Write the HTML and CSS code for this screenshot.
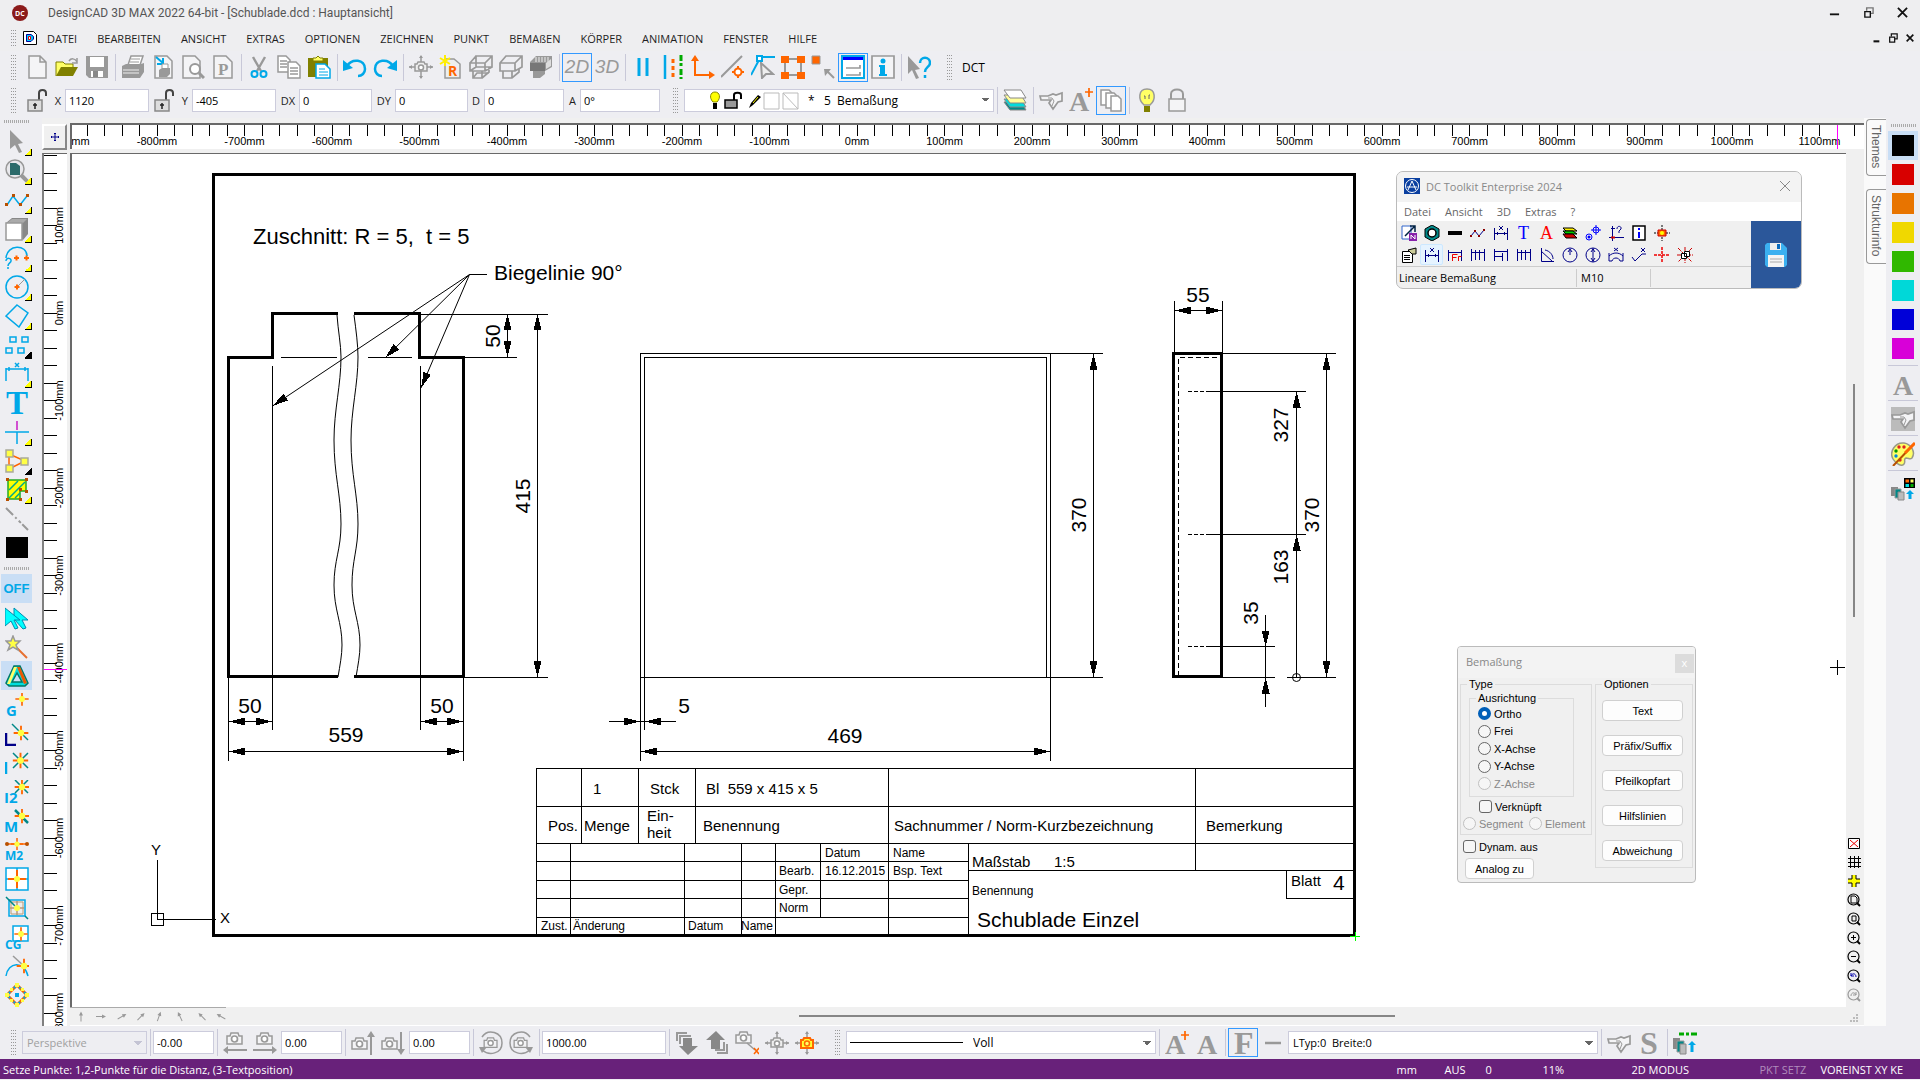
FILE: index.html
```html
<!DOCTYPE html>
<html lang="de">
<head>
    <meta charset="UTF-8">
    <meta name="viewport" content="width=device-width, initial-scale=1.0">
    <title>DesignCAD 3D MAX 2022 64-bit - [Schublade.dcd : Hauptansicht]</title>
    <link rel="stylesheet" href="styles.css">
</head>
<body>
    <!-- Icon sprite -->
    <svg class="sprite" aria-hidden="true">
        <!-- standard toolbar -->
        <symbol id="i-new" viewBox="0 0 24 24"><path d="M4 1h11l6 6v16H4zM15 1v6h6" fill="#f4f4f6" stroke="#999" stroke-width="1.5"/></symbol>
        <symbol id="i-open" viewBox="0 0 24 24"><path d="M1 21V7h7l2 2h8v3" fill="#ff6" stroke="#808000"/><path d="M1 21l5-9h17l-5 9z" fill="#808000"/><path d="M14 6c2-3 6-3 8 1m0-4v5h-5" fill="none" stroke="#999" stroke-width="1.5"/></symbol>
        <symbol id="i-save" viewBox="0 0 24 24"><path d="M1 1h22v22H4l-3-3z" fill="#999"/><path d="M5 2h14v10H5z" fill="#fff"/><path d="M6 16h12v6H6z" fill="#fff"/><path d="M8 16h5v6H8z" fill="#888"/></symbol>
        <symbol id="i-print" viewBox="0 0 24 24"><path d="M7 10l3-9h12l-3 9" fill="#fff" stroke="#999" stroke-width="1.5"/><path d="M10 4h9M9 7h9" stroke="#999"/><path d="M1 11l4-2h15l3-1v9l-4 6H1z" fill="#999"/><path d="M2 15h16M2 18h16" stroke="#eee"/></symbol>
        <symbol id="i-import" viewBox="0 0 24 24"><path d="M4 1h12l5 5v17H4z" fill="#f4f4f6" stroke="#999" stroke-width="1.5"/><path d="M5 2l7 6m0-5v6H6" fill="none" stroke="#00a8e8" stroke-width="2"/><path d="M8 15l3-2h8v6l-3 3H8z" fill="#999"/><path d="M11 13V9h6v4" fill="#fff" stroke="#999"/></symbol>
        <symbol id="i-preview" viewBox="0 0 24 24"><path d="M2 1h12l5 5v17H2z" fill="#f4f4f6" stroke="#999" stroke-width="1.5"/><circle cx="14" cy="14" r="5" fill="#fff" stroke="#999" stroke-width="2"/><path d="M18 18l5 5" stroke="#999" stroke-width="3"/></symbol>
        <symbol id="i-pdoc" viewBox="0 0 24 24"><path d="M3 1h12l6 6v16H3z" fill="#f4f4f6" stroke="#999" stroke-width="1.5"/><text x="7" y="20" class="serif-b" font-size="17" fill="#999">P</text></symbol>
        <symbol id="i-cut" viewBox="0 0 24 24"><path d="M6 2l8 14M18 2l-8 14" stroke="#999" stroke-width="2.4"/><g fill="none" stroke="#00a8e8" stroke-width="2"><circle cx="7.5" cy="19" r="3"/><circle cx="16.5" cy="19" r="3"/></g></symbol>
        <symbol id="i-copy" viewBox="0 0 24 24"><g fill="#fff" stroke="#999" stroke-width="1.5"><path d="M1 1h8l4 4v12H1z"/><path d="M11 7h8l4 4v12H11z"/></g><path d="M3 6h7M3 9h7M3 12h7M13 13h8M13 16h8M13 19h8" stroke="#999" stroke-width="1.5"/></symbol>
        <symbol id="i-paste" viewBox="0 0 24 24"><path d="M1 3h20v19H1z" fill="#808000"/><path d="M6 6V3h3l2-2 2 2h3v3z" fill="#ff6" stroke="#808000"/><path d="M9 9h9l5 5v9H9z" fill="#fff" stroke="#00a8e8" stroke-width="1.5"/><path d="M12 14h6M12 17h9M12 20h9" stroke="#00a8e8"/></symbol>
        <symbol id="i-undo" viewBox="0 0 24 24"><path d="M4 11c5-8 18-7 18 3 0 4-3 7-7 7" fill="none" stroke="#00a8e8" stroke-width="2.5"/><path d="M0 5v11l10-3z" fill="#00a8e8"/></symbol>
        <symbol id="i-redo" viewBox="0 0 24 24"><path d="M20 11C15 3 2 4 2 14c0 4 3 7 7 7" fill="none" stroke="#00a8e8" stroke-width="2.5"/><path d="M24 5v11l-10-3z" fill="#00a8e8"/></symbol>
        <symbol id="i-cam-cross" viewBox="0 0 24 24"><path d="M12 1v22M0 12h24" stroke="#999" stroke-width="1.5"/><path d="M12 0l2 3h-4zM12 24l2-3h-4zM0 12l3-2v4zM24 12l-3-2v4z" fill="#999"/><path d="M6 9h2l1-2h6l1 2h2v7H6z" fill="#eee" stroke="#999" stroke-width="1.5"/><circle cx="12" cy="12.5" r="2.5" fill="#fff" stroke="#999" stroke-width="1.5"/></symbol>
        <symbol id="i-cam-on" viewBox="0 0 24 24"><path d="M12 1v22M0 12h24" stroke="#999" stroke-width="1.5"/><path d="M12 0l2 3h-4zM12 24l2-3h-4zM0 12l3-2v4zM24 12l-3-2v4z" fill="#999"/><path d="M6 9h2l1-2h6l1 2h2v8H6z" fill="#ff3" stroke="#f60" stroke-width="2"/><circle cx="12" cy="12.5" r="2.5" fill="#ff6" stroke="#f60" stroke-width="1.5"/></symbol>
        <symbol id="i-render" viewBox="0 0 24 24"><path d="M6 4h9l6 5v14H6z" fill="#eee" stroke="#999" stroke-width="1.5"/><path d="M6 0v11M1 3l10 6M11 3L1 9" stroke="#fe0" stroke-width="2"/><text x="9" y="21" class="ui-b" font-size="14" fill="#f60">R</text></symbol>
        <symbol id="i-wire" viewBox="0 0 24 24"><path d="M7 1h16v11H7zM1 8h15v8H1zM1 8l6-7M16 8l7-7M16 16l7-4M1 16l6-4M4 16v7h9v-7M13 23l7-6v-5M4 23l4-5h12" fill="none" stroke="#999" stroke-width="1.7"/></symbol>
        <symbol id="i-hidden" viewBox="0 0 24 24"><path d="M1 8l6-7h16v11l-7 4H1zM1 8h15v8M16 8l7-7M4 16v7h9l7-6v-3M13 23v-7" fill="none" stroke="#999" stroke-width="1.7"/></symbol>
        <symbol id="i-shade" viewBox="0 0 24 24"><path d="M1 7l6-6h16v11l-7 4v3l-5 4H4v-7H1z" fill="#999"/><path d="M7 2v5M10 2v5M13 2v5M16 2v5M19 2v5" stroke="#eee"/><path d="M17 8l5-4v7l-5 3z" fill="#ddd"/><path d="M1 8h15v8H1z" fill="#777"/></symbol>
        <symbol id="i-parallel" viewBox="0 0 24 24"><path d="M8 3v18M16 3v18" stroke="#00a8e8" stroke-width="3"/></symbol>
        <symbol id="i-lines" viewBox="0 0 24 24"><path d="M4 0v24" stroke="#00a8e8" stroke-width="2.5"/><path d="M12 4v18" stroke="#f60" stroke-width="3" stroke-dasharray="4 3"/><path d="M20 0v24" stroke="#0a0" stroke-width="3" stroke-dasharray="6 2 3 3"/></symbol>
        <symbol id="i-axes" viewBox="0 0 24 24"><path d="M4 3v17h17" fill="none" stroke="#f60" stroke-width="2"/><path d="M4 0l4 6H0zM24 20l-6 4v-8z" fill="#f60"/></symbol>
        <symbol id="i-snapline" viewBox="0 0 24 24"><path d="M0 22L21 1" stroke="#999" stroke-width="2"/><path d="M17 11v12M11 17h12" stroke="#f60" stroke-width="2"/><circle cx="17" cy="17" r="3.5" fill="#fff" stroke="#f60" stroke-width="2"/></symbol>
        <symbol id="i-vertex" viewBox="0 0 24 24"><path d="M0 20L8 5M11 2h13" stroke="#00a8e8" stroke-width="2"/><path d="M10 8l12 11h-7l-4 4z" fill="#eee" stroke="#999" stroke-width="2"/><path d="M6 1h5v5H6z" fill="#fff" stroke="#00a8e8" stroke-width="2"/></symbol>
        <symbol id="i-nodes4" viewBox="0 0 24 24"><path d="M4 4h16v16H4z" fill="none" stroke="#999" stroke-width="2"/><path d="M0 1h8v7H0zM16 1h8v7h-8zM0 17h8v7H0zM16 17h8v7h-8z" fill="#f60"/></symbol>
        <symbol id="i-node1" viewBox="0 0 24 24"><path d="M1 1h8v8H1z" fill="#f60" stroke="#999"/><path d="M23 23l-8-8" stroke="#999" stroke-width="2"/><path d="M13 14h7l-6 7z" fill="#999"/></symbol>
        <symbol id="i-panel" viewBox="0 0 24 24"><path d="M1 1h22v22H1z" fill="#fff" stroke="#00a8e8" stroke-width="2"/><path d="M2 2h20v3H2z" fill="#00f"/><path d="M5 13h14v-3M5 20h14v-3" fill="none" stroke="#999" stroke-width="1.7"/></symbol>
        <symbol id="i-info" viewBox="0 0 24 24"><path d="M1 1h22v22H1z" fill="#f4f4f6" stroke="#999" stroke-width="1.7"/><circle cx="12" cy="6" r="2.5" fill="#00a8e8"/><path d="M8 10h6v9h2v2H8v-2h1v-7H8z" fill="#00a8e8"/></symbol>
        <symbol id="i-help" viewBox="0 0 24 24"><path d="M1 1l12 13-5 1 4 8-3 1-4-9-4 4z" fill="#999"/><path d="M13 8c0-7 10-7 10 0 0 4-5 4-5 9M18 20v3" fill="none" stroke="#00a8e8" stroke-width="2.5"/></symbol>
        <!-- coordinate and layer bar -->
        <symbol id="i-unlock" viewBox="0 0 24 24"><path d="M14 12V5c0-4 7-4 7 0v3" fill="none" stroke="#444" stroke-width="2"/><path d="M3 12h14v11H3z" fill="#ddd" stroke="#888" stroke-width="1.5"/><path d="M10 15v6M8 17h4" stroke="#222" stroke-width="1.5" fill="none"/></symbol>
        <symbol id="i-layers" viewBox="0 0 24 24"><g stroke="#888"><path d="M1 14h17l5 8H7z" fill="#088"/><path d="M1 11h17l5 8H7z" fill="#0dd"/><path d="M1 7h17l5 8H7z" fill="#ff9"/><path d="M1 2h17l5 8H7z" fill="#fff"/></g></symbol>
        <symbol id="i-hand" viewBox="0 0 24 24"><path d="M1 8h8l5-2 3 1 6-2v8l-4 1-5 7-4-6 2-3H2z" fill="#f4f4f6" stroke="#999" stroke-width="1.7"/><path d="M9 10h4l2 3-2 5" fill="none" stroke="#999"/></symbol>
        <symbol id="i-aplus" viewBox="0 0 24 24"><text x="0" y="23" class="serif-b" font-size="28" fill="#999">A</text><path d="M20 0v9M16 4h8" stroke="#f60" stroke-width="1.7"/></symbol>
        <symbol id="i-a" viewBox="0 0 24 24"><text x="2" y="23" class="serif-b" font-size="28" fill="#999">A</text></symbol>
        <symbol id="i-f" viewBox="0 0 24 24"><text x="3" y="23" class="serif-b" font-size="32" fill="#999">F</text></symbol>
        <symbol id="i-s" viewBox="0 0 24 24"><text x="3" y="23" class="serif-b" font-size="32" fill="#999">S</text></symbol>
        <symbol id="i-pages" viewBox="0 0 24 24"><g fill="#fff" stroke="#999" stroke-width="1.5"><path d="M2 2h8l3 3v12H2z"/><path d="M7 5h8l3 3v12H7z"/><path d="M12 8h7l3 3v12H12z"/></g></symbol>
        <symbol id="i-bulb" viewBox="0 0 24 24"><path d="M9 17c-6-5-6-16 3-16s9 11 3 16z" fill="#ff6" stroke="#999" stroke-width="1.5"/><path d="M9 18h6v6H9z" fill="#808000"/><path d="M9 8h1v3M15 7h-1v4" stroke="#666" fill="none"/></symbol>
        <symbol id="i-lock" viewBox="0 0 24 24"><path d="M6 11V6c0-6 12-6 12 0v5" fill="none" stroke="#999" stroke-width="2"/><path d="M4 11h16v12H4z" fill="#f4f4f6" stroke="#999" stroke-width="1.5"/></symbol>
        <!-- drawing tools -->
        <symbol id="i-arrow" viewBox="0 0 24 24"><path d="M5 0l13 13-5 1 4 8-3 1-4-8-5 4z" fill="#999"/></symbol>
        <symbol id="i-zoom" viewBox="0 0 24 24"><path d="M16 16l7 7" stroke="#999" stroke-width="4"/><circle cx="10" cy="10" r="9" fill="#e8e8ec" stroke="#999" stroke-width="1.5"/><path d="M5 4h6l4 3v9H5z" fill="#2c6b6b"/></symbol>
        <symbol id="i-poly" viewBox="0 0 24 24"><path d="M2 17l6-9 7 9 7-9" fill="none" stroke="#00a8e8" stroke-width="1.5"/><path d="M0 15h3v3H0zM7 6h3v3H7zM14 15h3v3h-3zM21 6h3v3h-3z" fill="#b85000"/></symbol>
        <symbol id="i-box" viewBox="0 0 24 24"><path d="M1 6l6-5h16v16l-5 6z" fill="#888"/><path d="M2 6l5-4h15l-4 4z" fill="#aaa"/><path d="M1 6h16v17H1z" fill="#fff" stroke="#999" stroke-width="1.5"/></symbol>
        <symbol id="i-arc" viewBox="0 0 24 24"><path d="M1 12C2-2 22-2 22 10" fill="none" stroke="#00a8e8" stroke-width="1.5"/><path d="M1 15c0-4 6-3 5 0 0 2-3 2-3 5m0 1v2" fill="none" stroke="#00a8e8" stroke-width="1.5"/><path d="M9 12h5M11.5 9.5v5M19 12h5M21.5 9.5v5" stroke="#f60" stroke-width="2"/></symbol>
        <symbol id="i-circle" viewBox="0 0 24 24"><circle cx="12" cy="12" r="11" fill="none" stroke="#00a8e8" stroke-width="1.5"/><path d="M12 12l8-8" stroke="#999"/><path d="M9.5 12h5M12 9.5v5" stroke="#f60" stroke-width="2"/></symbol>
        <symbol id="i-pentagon" viewBox="0 0 24 24"><path d="M12 1l11 8-9 14L1 12z" fill="none" stroke="#00a8e8" stroke-width="1.5"/></symbol>
        <symbol id="i-array" viewBox="0 0 24 24"><path d="M5 4h6v5H5zM17 4h6v5h-6zM1 15h6v5H1zM13 15h6v5h-6z" fill="none" stroke="#00a8e8" stroke-width="1.5"/></symbol>
        <symbol id="i-dim" viewBox="0 0 24 24"><path d="M1 6v13M23 6v13M1 7h22M4 5v4M20 5v4M10 1l4 4M14 1l-4 4" stroke="#00a8e8" stroke-width="1.5" fill="none"/></symbol>
        <symbol id="i-text" viewBox="0 0 24 24"><text x="1" y="23" class="serif-b" font-size="33" fill="#00a8e8">T</text></symbol>
        <symbol id="i-cross" viewBox="0 0 24 24"><path d="M0 12h24M12 12v12" stroke="#00a8e8" stroke-width="1.5"/><path d="M12 1v9" stroke="#c3c" stroke-width="1.7"/></symbol>
        <symbol id="i-graph" viewBox="0 0 24 24"><path d="M4 5l16 7L4 20z" fill="none" stroke="#f60" stroke-width="1.5"/><path d="M1 1h7v7H1zM16 9h7v7h-7zM1 16h7v7H1z" fill="#ff4" stroke="#aa9" stroke-width="1.5"/></symbol>
        <symbol id="i-hatch" viewBox="0 0 24 24"><path d="M3 2h18v11h-6v8H3z" fill="#ff0" stroke="#2a2" stroke-width="1.5"/><path d="M4 12L13 3M4 20L20 4M10 20l5-5" stroke="#0a8" stroke-width="1.5"/><path d="M1 0h3v3H1zM20 0h3v3h-3zM20 12h3v3h-3zM14 10h3v3h-3zM1 20h3v3H1zM14 20h3v3h-3z" fill="#b85000"/></symbol>
        <symbol id="i-dash" viewBox="0 0 24 24"><path d="M1 1l22 22" stroke="#999" stroke-width="2" stroke-dasharray="10 3 2 3 3 2"/></symbol>
        <symbol id="i-black" viewBox="0 0 24 24"><path d="M1 1h22v21H1z"/></symbol>
        <!-- snap tools -->
        <symbol id="star" viewBox="0 0 24 24"><path d="M12 4v16M4 12h16" stroke="#f60" stroke-width="2"/><circle cx="12" cy="12" r="3.5" fill="#ff4"/></symbol>
        <symbol id="i-arrows" viewBox="0 0 24 24"><g fill="#0ff" stroke="#008bb0"><path d="M9 2l14 12h-6l4 8-3 1-9-10z"/><path d="M0 2l15 12H9l4 8-3 1-4-8-6 5z"/></g></symbol>
        <symbol id="i-wand" viewBox="0 0 24 24"><path d="M10 11l12 12" stroke="#e67030" stroke-width="2"/><path d="M8 1l2 5h5l-4 4 2 5-5-3-5 3 2-5-4-4h5z" fill="#ff4" stroke="#999" stroke-width="1.5"/></symbol>
        <symbol id="i-delta" viewBox="0 0 24 24"><path d="M9 2h6l8 17-3 3H4l-3-3zM12 9l-5 9h10z" fill="#0dd" stroke="#076" stroke-width="1.5" fill-rule="evenodd"/><path d="M9 3h3L5 20H2z" fill="#ff6"/><path d="M12 3h3l7 16-3 1z" fill="#e50"/></symbol>
        <symbol id="i-g" viewBox="0 0 24 24"><text x="1" y="23" class="ui-b" font-size="15" fill="#00a8e8">G</text><use href="#star" x="7" y="-4" width="20" height="20"/></symbol>
        <symbol id="i-l" viewBox="0 0 24 24"><path d="M7 2l16 16" stroke="#088" stroke-width="1.5"/><path d="M1 11v12h10" fill="none" stroke="#008" stroke-width="2.5"/><use href="#star" x="5" y="0" width="22" height="22"/></symbol>
        <symbol id="i-i" viewBox="0 0 24 24"><path d="M8 2l15 15M23 2L8 17" stroke="#088" stroke-width="1.5"/><path d="M1 11v12" stroke="#00a8e8" stroke-width="2.5"/><use href="#star" x="4" y="-2" width="23" height="23"/></symbol>
        <symbol id="i-i2" viewBox="0 0 24 24"><path d="M10 0l13 13M23 0L10 13" stroke="#088" stroke-width="1.5"/><text x="-1" y="23" class="ui-b" font-size="15" fill="#00a8e8">I2</text><use href="#star" x="6" y="-4" width="22" height="22"/></symbol>
        <symbol id="i-m" viewBox="0 0 24 24"><path d="M10 1l13 13" stroke="#088" stroke-width="2.5"/><text x="-1" y="23" class="ui-b" font-size="15" fill="#00a8e8">M</text><use href="#star" x="6" y="-4" width="22" height="22"/></symbol>
        <symbol id="i-m2" viewBox="0 0 24 24"><path d="M2 6h20" stroke="#f60" stroke-width="1.5"/><circle cx="2" cy="6" r="2" fill="#b85000"/><circle cx="22" cy="6" r="2" fill="#b85000"/><text x="0" y="22" class="ui-b" font-size="12" fill="#00a8e8">M2</text><use href="#star" x="3" y="-3" width="18" height="18"/></symbol>
        <symbol id="i-grid" viewBox="0 0 24 24"><path d="M1 1h22v22H1z" fill="#fff" stroke="#00a8e8" stroke-width="1.5"/><path d="M12 1v22M1 12h22" stroke="#00a8e8" stroke-width="1.5"/><path d="M12 3v18M3 12h18" stroke="#f60" stroke-width="2"/><circle cx="12" cy="12" r="3" fill="#ff4"/></symbol>
        <symbol id="i-grid2" viewBox="0 0 24 24"><path d="M4 4h16v16H4z" fill="#eee" stroke="#00a8e8" stroke-width="1.5"/><path d="M6 6h12v12H6z" fill="none" stroke="#b97"/><path d="M12 5v14M5 12h14" stroke="#b97" stroke-width="1.5"/><path d="M1 1l9 9M20 20l3 3" stroke="#088" stroke-width="1.5"/><circle cx="12" cy="12" r="3" fill="#ff4"/></symbol>
        <symbol id="i-cg" viewBox="0 0 24 24"><path d="M8 1h15v15H8z" fill="#fff" stroke="#00a8e8" stroke-width="1.5"/><text x="0" y="24" class="ui-b" font-size="12" fill="#00a8e8">CG</text><use href="#star" x="6" y="-1" width="20" height="20"/></symbol>
        <symbol id="i-tangent" viewBox="0 0 24 24"><path d="M1 22c2-14 18-16 22 0" fill="none" stroke="#00a8e8" stroke-width="1.5"/><path d="M8 2l12 11" stroke="#999" stroke-width="1.5"/><use href="#star" x="8" y="1" width="22" height="22"/></symbol>
        <symbol id="i-ring" viewBox="0 0 24 24"><path d="M12 2l10 10-10 10L2 12z" fill="none" stroke="#f60" stroke-width="3"/><path d="M12 2l10 10-10 10L2 12z" fill="none" stroke="#00a8e8" stroke-width="2" stroke-dasharray="2 5" stroke-dashoffset="-3"/><path d="M10 0h4v4h-4zM16 5h3v3h-3zM20 10h4v4h-4zM16 16h3v3h-3zM10 20h4v4h-4zM5 16h3v3H5zM0 10h4v4H0zM5 5h3v3H5z" fill="#ff4"/><path d="M10 10h4v4h-4z" fill="#00a8e8"/></symbol>
        <!-- view bar -->
        <symbol id="cam" viewBox="0 0 18 14"><path d="M1 4h3l1-3h7l1 3h3v8H1z" fill="#f4f4f6" stroke="#999" stroke-width="1.5"/><circle cx="8.5" cy="7" r="3" fill="#fff" stroke="#999" stroke-width="1.7"/></symbol>
        <symbol id="i-cam-l" viewBox="0 0 24 24"><use href="#cam" x="3" y="1" width="18" height="14"/><path d="M2 19h22" stroke="#999" stroke-width="2"/><path d="M0 19l5-4v8z" fill="#999"/></symbol>
        <symbol id="i-cam-r" viewBox="0 0 24 24"><use href="#cam" x="3" y="1" width="18" height="14"/><path d="M0 19h22" stroke="#999" stroke-width="2"/><path d="M24 19l-5-4v8z" fill="#999"/></symbol>
        <symbol id="i-cam-u" viewBox="0 0 24 24"><use href="#cam" x="0" y="6" width="18" height="14"/><path d="M20 3v21" stroke="#999" stroke-width="2"/><path d="M20 0l4 6h-8z" fill="#999"/></symbol>
        <symbol id="i-cam-d" viewBox="0 0 24 24"><use href="#cam" x="0" y="6" width="18" height="14"/><path d="M20 1v20" stroke="#999" stroke-width="2"/><path d="M20 24l4-6h-8z" fill="#999"/></symbol>
        <symbol id="i-cam-cw" viewBox="0 0 24 24"><use href="#cam" x="4" y="6" width="16" height="12"/><path d="M3 6c6-9 20-5 20 6s-13 13-20 7" fill="none" stroke="#999" stroke-width="1.5"/><path d="M0 16h8l-5 6z" fill="#999"/></symbol>
        <symbol id="i-cam-ccw" viewBox="0 0 24 24"><use href="#cam" x="4" y="6" width="16" height="12"/><path d="M21 6C15-3 1 1 1 12s13 13 20 7" fill="none" stroke="#999" stroke-width="1.5"/><path d="M24 16h-8l5 6z" fill="#999"/></symbol>
        <symbol id="i-down" viewBox="0 0 24 24"><path d="M2 10V2h10M5 13V5h11" fill="none" stroke="#999" stroke-width="2"/><path d="M8 7h9v8h6L13 24 4 15h4z" fill="#888"/></symbol>
        <symbol id="i-up" viewBox="0 0 24 24"><path d="M22 13v9H12M19 11v8h-9" fill="none" stroke="#999" stroke-width="2"/><path d="M6 18h9V9h5L11 0 1 9h5z" fill="#888"/></symbol>
        <symbol id="i-cam-x" viewBox="0 0 24 24"><use href="#cam" x="0" y="0" width="18" height="14"/><path d="M12 12l8 7" stroke="#999" stroke-width="1.5"/><path d="M19 17l5 6M24 17l-5 6" stroke="#f60" stroke-width="1.5"/></symbol>
        <symbol id="i-minus" viewBox="0 0 24 24"><path d="M4 12h16" stroke="#999" stroke-width="2.5"/></symbol>
        <symbol id="i-stack" viewBox="0 0 24 24"><path d="M6 3h5M13 3h3M18 3h6" stroke="#0a0" stroke-width="3"/><path d="M0 7h7v11H0z" fill="#888"/><path d="M4 10h7v11H4z" fill="#088" stroke="#999"/><path d="M7 13h6v10H7z" fill="#bbb" stroke="#888"/><path d="M19 10l4 4h-2.5v7h-3v-7H15z" fill="#00a8e8"/></symbol>
        <symbol id="i-palette" viewBox="0 0 24 24"><path d="M13 1C4 0-2 10 2 17c3 5 9 8 11 5 2-2-1-5 2-6 3 0 4 2 6 0C25 10 20 2 13 1z" fill="#ff6" stroke="#998" stroke-width="1.5"/><g fill="#d22"><circle cx="8" cy="5" r="1.7"/><circle cx="13" cy="5" r="1.7"/><circle cx="5" cy="9" r="1.7" fill="#090"/><circle cx="5" cy="14" r="1.7" fill="#08d"/><circle cx="9" cy="18" r="1.7"/></g><path d="M2 24L23 2" stroke="#b85000" stroke-width="2"/><path d="M14 11L24 1" stroke="#f60" stroke-width="3"/></symbol>
        <symbol id="i-colstack" viewBox="0 0 24 24"><path d="M13 1h11v10H13z"/><path d="M14.5 2.5H18v3h-3.5z" fill="#f60"/><path d="M19.5 2.5h3v3h-3z" fill="#ff6"/><path d="M14.5 7H18v3h-3.5z" fill="#0dd"/><path d="M19.5 7h3v3h-3z" fill="#0a0"/><path d="M0 10h7v9H0z" fill="#888"/><path d="M4 12h6v9H4z" fill="#088" stroke="#999"/><path d="M7 15h6v8H7z" fill="#bbb" stroke="#888"/><path d="M19 13l4 4h-2.5v5h-3v-5H15z" fill="#00a8e8"/></symbol>
        <!-- mini view icons -->
        <symbol id="m-mag" viewBox="0 0 14 14"><circle cx="6.5" cy="6.5" r="5.5" fill="none" stroke="currentColor" stroke-width="1.2"/><path d="M10 10l3 3" stroke="currentColor" stroke-width="2"/></symbol>
        <!-- toolkit icons -->
        <symbol id="k-dim" viewBox="0 0 16 16"><path d="M1.5 3v12M14.5 3v12M1 8.5h14M4.5 7v3M11.5 7v3M6 1l4 4M10 1L6 5" stroke="currentColor" fill="none"/></symbol>
        <symbol id="k-comb" viewBox="0 0 16 16"><path d="M1.5 2v12M14.5 2v12M5.5 3v10M9.5 3v10M1 5.5h14" stroke="#008" fill="none"/></symbol>
    </svg>

    <header class="titlebar">
        <svg class="app-logo" viewBox="0 0 16 16"><circle cx="8" cy="8" r="8" fill="#8b1a1a"/><text x="3" y="11" class="ui-b" font-size="7" fill="#fff">DC</text></svg>
        <h1>DesignCAD 3D MAX 2022 64-bit - [Schublade.dcd : Hauptansicht]</h1>
        <div class="win-buttons">
            <button aria-label="Minimieren"><svg viewBox="0 0 12 12"><path d="M1 8h10" stroke="#111" stroke-width="2"/></svg></button>
            <button aria-label="Wiederherstellen"><svg viewBox="0 0 12 12"><path d="M4 4V1h7v6H8" fill="none" stroke="#777" stroke-width="1.5"/><path d="M2 5h6v6H2z" fill="none" stroke="#111" stroke-width="1.5"/></svg></button>
            <button aria-label="Schließen"><svg viewBox="0 0 12 12"><path d="M1 1l10 10M11 1L1 11" stroke="#111" stroke-width="2"/></svg></button>
        </div>
    </header>

    <nav class="menubar">
        <span class="grip"></span>
        <svg class="doc-logo" viewBox="0 0 16 16"><path d="M1.5 1.5h10l3 3v10h-13z" fill="#fff" stroke="#000"/><path d="M4.5 4.5H9l2.5 2V9l-2.500 2.500h-4.500z" fill="#0cf" stroke="#009"/><path d="M6.5 6.5h2v3h-2z" fill="#fff" stroke="#e00"/></svg>
        <a href="#">DATEI</a>
        <a href="#">BEARBEITEN</a>
        <a href="#">ANSICHT</a>
        <a href="#">EXTRAS</a>
        <a href="#">OPTIONEN</a>
        <a href="#">ZEICHNEN</a>
        <a href="#">PUNKT</a>
        <a href="#">BEMAßEN</a>
        <a href="#">KÖRPER</a>
        <a href="#">ANIMATION</a>
        <a href="#">FENSTER</a>
        <a href="#">HILFE</a>
        <div class="win-buttons small">
            <button aria-label="Fenster minimieren"><svg viewBox="0 0 12 12"><path d="M3 10h7" stroke="#111" stroke-width="2.5"/></svg></button>
            <button aria-label="Fenster wiederherstellen"><svg viewBox="0 0 12 12"><path d="M4 4V1h7v6H8M2 5h6v6H2z" fill="none" stroke="#111" stroke-width="1.5"/></svg></button>
            <button aria-label="Fenster schließen"><svg viewBox="0 0 12 12"><path d="M2 2l8 8M10 2l-8 8" stroke="#111" stroke-width="2"/></svg></button>
        </div>
    </nav>

    <div class="toolbar standard">
        <span class="grip"></span>
        <button aria-label="Neu"><svg><use href="#i-new"/></svg></button>
        <button aria-label="Öffnen"><svg><use href="#i-open"/></svg></button>
        <button aria-label="Speichern"><svg><use href="#i-save"/></svg></button>
        <span class="sep"></span>
        <button aria-label="Drucken"><svg><use href="#i-print"/></svg></button>
        <button aria-label="Schnelldruck"><svg><use href="#i-import"/></svg></button>
        <button aria-label="Seitenansicht"><svg><use href="#i-preview"/></svg></button>
        <button aria-label="Parameter"><svg><use href="#i-pdoc"/></svg></button>
        <span class="sep"></span>
        <button aria-label="Ausschneiden"><svg><use href="#i-cut"/></svg></button>
        <button aria-label="Kopieren"><svg><use href="#i-copy"/></svg></button>
        <button aria-label="Einfügen"><svg><use href="#i-paste"/></svg></button>
        <span class="sep"></span>
        <button aria-label="Rückgängig"><svg><use href="#i-undo"/></svg></button>
        <button aria-label="Wiederholen"><svg><use href="#i-redo"/></svg></button>
        <span class="sep"></span>
        <button aria-label="Kamera"><svg><use href="#i-cam-cross"/></svg></button>
        <button aria-label="Rendern"><svg><use href="#i-render"/></svg></button>
        <button aria-label="Drahtmodell"><svg><use href="#i-wire"/></svg></button>
        <button aria-label="Verdeckte Linien"><svg><use href="#i-hidden"/></svg></button>
        <button aria-label="Schattiert"><svg><use href="#i-shade"/></svg></button>
        <span class="sep"></span>
        <button class="mode on">2D</button>
        <button class="mode">3D</button>
        <span class="sep"></span>
        <button aria-label="Parallel"><svg><use href="#i-parallel"/></svg></button>
        <button aria-label="Linienarten"><svg><use href="#i-lines"/></svg></button>
        <button aria-label="Achsen"><svg><use href="#i-axes"/></svg></button>
        <button aria-label="Punkt auf Linie"><svg><use href="#i-snapline"/></svg></button>
        <button aria-label="Punktauswahl"><svg><use href="#i-vertex"/></svg></button>
        <button aria-label="Auswahlgriffe"><svg><use href="#i-nodes4"/></svg></button>
        <button aria-label="Griff"><svg><use href="#i-node1"/></svg></button>
        <button class="on" aria-label="Befehlsfenster"><svg><use href="#i-panel"/></svg></button>
        <button aria-label="Info"><svg><use href="#i-info"/></svg></button>
        <span class="sep"></span>
        <button aria-label="Hilfe"><svg><use href="#i-help"/></svg></button>
        <span class="grip second"></span>
        <a class="dct" href="#">DCT</a>
    </div>

    <div class="toolbar coords">
        <span class="grip"></span>
        <button aria-label="X sperren"><svg><use href="#i-unlock"/></svg></button>
        <label class="wide">X <input type="text" value="1120"></label>
        <button aria-label="Y sperren"><svg><use href="#i-unlock"/></svg></button>
        <label class="wide">Y <input type="text" value="-405"></label>
        <label>DX <input type="text" value="0"></label>
        <label>DY <input type="text" value="0"></label>
        <label class="angle">D <input type="text" value="0"></label>
        <label class="angle">A <input type="text" value="0°"></label>
        <span class="grip third"></span>
        <div class="layer-box">
            <select class="combo layer" aria-label="Layer"><option>*&nbsp;&nbsp;&nbsp;5&nbsp;&nbsp;Bemaßung</option></select>
            <svg class="layer-flags" viewBox="0 0 90 20">
                <path d="M3 11c-4-4-3-10 2-10s6 6 2 10z" fill="#ff0" stroke="#880"/><path d="M3 12h4v6H3z" fill="#000"/>
                <path d="M15 9h12v8H15z" fill="#999" stroke="#000" stroke-width="1.5"/><path d="M24 9V4c0-3 7-3 7 0v4" fill="none" stroke="#000" stroke-width="2"/>
                <path d="M39 17l2-5 7-8 3 2-8 8z" fill="#000"/><path d="M43 12l5-6" stroke="#ff0"/>
                <path d="M54 2h15v16H54z" fill="#fff" stroke="#bbb"/><path d="M73 2h15v16H73zl15 16" fill="#fff" stroke="#bbb"/>
            </svg>
        </div>
        <span class="sep"></span>
        <button aria-label="Layer"><svg><use href="#i-layers"/></svg></button>
        <span class="sep"></span>
        <button aria-label="Eigenschaft übernehmen"><svg><use href="#i-hand"/></svg></button>
        <button aria-label="Textstil neu"><svg><use href="#i-aplus"/></svg></button>
        <button class="on" aria-label="Mehrfach"><svg><use href="#i-pages"/></svg></button>
        <span class="sep"></span>
        <button aria-label="Layer sichtbar"><svg><use href="#i-bulb"/></svg></button>
        <button aria-label="Layer sperren"><svg><use href="#i-lock"/></svg></button>
    </div>

    <main class="workspace">
        <aside class="tools">
            <span class="grip flat"></span>
            <button class="more" aria-label="Auswahl"><svg><use href="#i-arrow"/></svg></button>
            <button class="more" aria-label="Zoom"><svg><use href="#i-zoom"/></svg></button>
            <button class="more" aria-label="Linie"><svg><use href="#i-poly"/></svg></button>
            <button class="more" aria-label="Quader"><svg><use href="#i-box"/></svg></button>
            <button class="more" aria-label="Bogen"><svg><use href="#i-arc"/></svg></button>
            <button class="more" aria-label="Kreis"><svg><use href="#i-circle"/></svg></button>
            <button class="more" aria-label="Polygon"><svg><use href="#i-pentagon"/></svg></button>
            <button class="more dark" aria-label="Anordnung"><svg><use href="#i-array"/></svg></button>
            <button class="more" aria-label="Bemaßung"><svg><use href="#i-dim"/></svg></button>
            <button aria-label="Text"><svg><use href="#i-text"/></svg></button>
            <button class="more" aria-label="Trimmen"><svg><use href="#i-cross"/></svg></button>
            <button class="more dark" aria-label="Punkte"><svg><use href="#i-graph"/></svg></button>
            <button class="more" aria-label="Schraffur"><svg><use href="#i-hatch"/></svg></button>
            <button aria-label="Linientyp"><svg><use href="#i-dash"/></svg></button>
            <button aria-label="Farbe"><svg><use href="#i-black"/></svg></button>
            <span class="grip flat"></span>
            <button class="on" aria-label="Fang aus">OFF</button>
            <button aria-label="Fang Auswahl"><svg><use href="#i-arrows"/></svg></button>
            <button aria-label="Zauberstab"><svg><use href="#i-wand"/></svg></button>
            <button class="on" aria-label="Fangdreieck"><svg><use href="#i-delta"/></svg></button>
            <button aria-label="Gravitation"><svg><use href="#i-g"/></svg></button>
            <button aria-label="Linienfang"><svg><use href="#i-l"/></svg></button>
            <button aria-label="Schnittpunkt"><svg><use href="#i-i"/></svg></button>
            <button aria-label="Schnittpunkt 2"><svg><use href="#i-i2"/></svg></button>
            <button aria-label="Mittelpunkt"><svg><use href="#i-m"/></svg></button>
            <button aria-label="Mittelpunkt 2"><svg><use href="#i-m2"/></svg></button>
            <button aria-label="Raster"><svg><use href="#i-grid"/></svg></button>
            <button aria-label="Flächenmitte"><svg><use href="#i-grid2"/></svg></button>
            <button aria-label="Schwerpunkt"><svg><use href="#i-cg"/></svg></button>
            <button aria-label="Tangente"><svg><use href="#i-tangent"/></svg></button>
            <button aria-label="Kreispunkte"><svg><use href="#i-ring"/></svg></button>
        </aside>

        <section class="view">
            <button class="corner" aria-label="Ursprung"><svg viewBox="0 0 8 8"><path d="M4 0v8M0 4h8M3 .5h2M3 7.5h2M.5 3v2M7.5 3v2" stroke="#008"/></svg></button>
            <svg class="ruler ruler-x" id="rulerX"></svg>
            <svg class="ruler ruler-y" id="rulerY"></svg>

            <div class="canvas">
                <svg class="drawing">
                    <defs>
                        <marker id="tip" viewBox="0 0 16 8" refX="16" refY="4" markerWidth="16" markerHeight="8" markerUnits="userSpaceOnUse" orient="auto-start-reverse"><path d="M0 0l16 4-16 4z"/></marker>
                    </defs>
                    <!-- sheet coordinates -->
                    <g transform="translate(-72 -154)">
                        <rect x="213.5" y="174.5" width="1141" height="761" class="thick"/>

                        <!-- flat pattern -->
                        <g class="thick">
                            <path d="M338 313.5H272.5V357.5H228.5V676.5H338"/>
                            <path d="M354 313.5H419.5V357.5H463.5V676.5H354"/>
                        </g>
                        <g class="thin">
                            <path d="M337 315C338 330 341 345 341 357C341 385 334 410 334 440C334 475 341 495 341 524C341 550 334 560 334 585C334 610 342 622 342 645C342 655 340 665 338 677" class="smooth"/>
                            <path d="M354 315C356 330 358 345 358 357C358 385 351 410 351 440C351 475 358 495 358 524C358 550 352 560 352 585C352 610 360 622 360 645C360 655 358 665 356 677" class="smooth"/>
                            <path d="M281 357.5H337M368 357.5H412M272.5 366V730M420.5 366V730"/>
                            <path d="M420 314.5H548M464 357.5H517M464 677.5H548M228.5 677V761M463.5 677V761"/>
                        </g>
                        <g class="dim">
                            <path d="M507.5 314V357"/><path d="M537.5 314V677"/>
                            <path d="M229 721.5H272"/><path d="M421 721.5H463"/><path d="M229 751.5H463"/>
                        </g>
                        <g class="leader">
                            <path d="M487 274.5H469.5L272.5 406"/>
                            <path d="M469.5 274.5L385 358"/>
                            <path d="M469.5 274.5L421 388"/>
                        </g>

                        <!-- front view -->
                        <g class="thin">
                            <path d="M640.5 761V353.5H1103M640.5 677.5H1103M1050.5 353V761"/>
                            <path d="M644.5 730V357.5H1046.5V677"/>
                            <path d="M640 721.5H645"/>
                        </g>
                        <g class="dim">
                            <path d="M1093.5 354V677"/><path d="M641 751.5H1050"/>
                        </g>
                        <g class="leader">
                            <path d="M609 721.5H640"/><path d="M676 721.5H645"/>
                        </g>

                        <!-- side view -->
                        <rect x="1173.5" y="353.5" width="48" height="323" class="thick"/>
                        <g class="thin">
                            <path d="M1178.5 676V357.5H1222" stroke-dasharray="5 3"/>
                            <path d="M1188 391.5H1207M1188 534.5H1207M1188 646.5H1207" stroke-dasharray="4 2"/>
                            <path d="M1207 391.5H1306M1207 534.5H1306M1207 646.5H1275"/>
                            <path d="M1174.5 301V353M1222.5 301V353M1223 353.5H1336M1223 677.5H1275M1287 677.5H1336"/>
                            <circle cx="1296.5" cy="677.5" r="4" class="smooth"/>
                        </g>
                        <g class="dim">
                            <path d="M1175 310.5H1222"/><path d="M1326.5 354V677"/>
                        </g>
                        <g class="leader">
                            <path d="M1296.5 677V391.5"/><path d="M1296.5 677V534.5"/>
                            <path d="M1265.5 615V646.5"/><path d="M1265.5 707V677.5"/>
                        </g>
                        <path d="M1265.5 646V678" class="thin"/>

                        <!-- dimension texts -->
                        <text x="253" y="244" class="t-note">Zuschnitt: R = 5,&#160; t = 5</text>
                        <text x="494" y="280" class="t-dim">Biegelinie 90°</text>
                        <g class="t-dim mid">
                            <text x="250" y="713">50</text>
                            <text x="442" y="713">50</text>
                            <text x="346" y="742">559</text>
                            <text x="684" y="713">5</text>
                            <text x="845" y="743">469</text>
                            <text x="1198" y="302">55</text>
                            <text transform="translate(500 336) rotate(-90)">50</text>
                            <text transform="translate(530 496) rotate(-90)">415</text>
                            <text transform="translate(1086 515) rotate(-90)">370</text>
                            <text transform="translate(1288 425) rotate(-90)">327</text>
                            <text transform="translate(1288 567) rotate(-90)">163</text>
                            <text transform="translate(1319 515) rotate(-90)">370</text>
                            <text transform="translate(1258 613) rotate(-90)">35</text>
                        </g>

                        <!-- title block -->
                        <path class="thin" d="M536.5 935V768.5H1354M536 806.5H1354M536 843.5H1354M536 861.5H968M536 880.5H968M536 898.5H968M536 917.5H968M581.5 768V843M638.5 768V843M695.5 768V843M888.5 768V935M1195.5 768V870M570.5 843V935M684.5 843V935M741.5 843V935M775.5 843V935M820.5 843V917M968.5 843V935M968 870.5H1354M1286.5 870V898.5H1354"/>
                        <g class="t-cell">
                            <text x="593" y="794">1</text>
                            <text x="650" y="794">Stck</text>
                            <text x="706" y="794">Bl&#160; 559 x 415 x 5</text>
                            <text x="548" y="831">Pos.</text>
                            <text x="584" y="831">Menge</text>
                            <text x="647" y="821">Ein-</text>
                            <text x="647" y="838">heit</text>
                            <text x="703" y="831">Benennung</text>
                            <text x="894" y="831">Sachnummer / Norm-Kurzbezeichnung</text>
                            <text x="1206" y="831">Bemerkung</text>
                            <text x="972" y="867">Maßstab</text>
                            <text x="1054" y="867">1:5</text>
                            <text x="1291" y="886">Blatt</text>
                        </g>
                        <g class="t-small">
                            <text x="825" y="857">Datum</text>
                            <text x="893" y="857">Name</text>
                            <text x="779" y="875">Bearb.</text>
                            <text x="825" y="875">16.12.2015</text>
                            <text x="893" y="875">Bsp. Text</text>
                            <text x="779" y="894">Gepr.</text>
                            <text x="779" y="912">Norm</text>
                            <text x="541" y="930">Zust.</text>
                            <text x="573" y="930">Änderung</text>
                            <text x="688" y="930">Datum</text>
                            <text x="741" y="930">Name</text>
                            <text x="972" y="895">Benennung</text>
                        </g>
                        <text x="977" y="927" class="t-dim">Schublade Einzel</text>
                        <text x="1333" y="890" class="t-dim">4</text>

                        <!-- origin mark, axis symbol, cursor -->
                        <path d="M1355.5 932V941M1350 936.5H1360" stroke="#0f0"/>
                        <path class="thin" d="M157.5 860V919.5H216M151.5 913.5H163.5V925.5H151.5z"/>
                        <g class="t-cell mid"><text x="156" y="855">Y</text><text x="225" y="923">X</text></g>
                        <path class="thin" d="M1837.5 660V675M1830 667.5H1845"/>
                    </g>
                </svg>

                <!-- DC Toolkit -->
                <section class="palette toolkit">
                    <header>
                        <svg viewBox="0 0 16 16"><path d="M0 0h16v16H0z" fill="#0a3fa0"/><circle cx="8" cy="8" r="6.5" fill="none" stroke="#fff"/><path d="M4 12L8 3l4 9M3 9h10" fill="none" stroke="#fff"/></svg>
                        <h2>DC Toolkit Enterprise 2024</h2>
                        <button aria-label="Schließen"><svg viewBox="0 0 12 12"><path d="M1 1l10 10M11 1L1 11" stroke="#888"/></svg></button>
                    </header>
                    <nav>
                        <a href="#">Datei</a><a href="#">Ansicht</a><a href="#">3D</a><a href="#">Extras</a><a href="#">?</a>
                    </nav>
                    <div class="toolkit-body">
                        <div class="toolkit-left">
                            <div class="kit-row">
                                <button aria-label="Notiz"><svg viewBox="0 0 16 16"><path d="M1 1h9v13H1z" fill="#fff" stroke="#36c"/><path d="M4 11L14 1M9 1h5v6" fill="none" stroke="#024" stroke-width="1.5"/><path d="M8 8h8v8H8z" fill="#82a"/><path d="M10 14v-4l4 4v-4" fill="none" stroke="#fff"/></svg></button>
                                <button aria-label="Mutter"><svg viewBox="0 0 16 16"><path d="M8 0l7 4v8l-7 4-7-4V4z" fill="#088" stroke="#000"/><circle cx="8" cy="8" r="4" fill="#fff" stroke="#000" stroke-width="1.5"/></svg></button>
                                <button aria-label="Linienstärke"><svg viewBox="0 0 16 16"><path d="M1 6h14v4H1z"/></svg></button>
                                <button aria-label="Polylinie"><svg viewBox="0 0 16 16"><path d="M1 11l4-5 4 5 5-6" fill="none" stroke="#008"/><path d="M0 10h2v2H0zM4 5h2v2H4zM8 10h2v2H8zM13 4h2v2h-2z" fill="#800"/></svg></button>
                                <button class="navy" aria-label="Maß"><svg><use href="#k-dim"/></svg></button>
                                <button aria-label="Text"><svg viewBox="0 0 16 16"><text x="2" y="14" class="serif" font-size="18" fill="#00f">T</text></svg></button>
                                <button aria-label="Textstil"><svg viewBox="0 0 16 16"><text x="1" y="14" class="serif" font-size="18" fill="#f00">A</text></svg></button>
                                <button aria-label="Layer"><svg viewBox="0 0 16 16"><path d="M1 3h10l4 3H4z" fill="#fe0" stroke="#000"/><path d="M1 6h10l4 3H4z" fill="#0c0" stroke="#000"/><path d="M1 9h10l4 4H4z" fill="#c00" stroke="#000"/></svg></button>
                                <button aria-label="Kreise"><svg viewBox="0 0 16 16"><g fill="none" stroke="#00f"><circle cx="4" cy="12" r="3"/><circle cx="11" cy="5" r="3"/><path d="M11 0v10M6 5h10"/></g><circle cx="4" cy="12" r="1.5" fill="#00f"/></svg></button>
                                <button aria-label="Koordinate"><svg viewBox="0 0 16 16"><path d="M4.5 1v15M1 12.5h15M3 3.5h4" stroke="#008" fill="none"/><path d="M9 4c0-4 5-3 4 0l-2 2v2" stroke="#008" fill="none"/><path d="M3 12.5h4" stroke="#c00" stroke-width="2"/></svg></button>
                                <button aria-label="Info"><svg viewBox="0 0 16 16"><path d="M2 1h12v14H2z" fill="#fff" stroke="#000" stroke-width="1.5"/><path d="M8 3v2M8 7v6" stroke="#00f" stroke-width="2"/></svg></button>
                                <button aria-label="Ursprung"><svg viewBox="0 0 16 16"><path d="M8 0v16M0 8h16" stroke="#000" stroke-dasharray="2 1"/><path d="M4 5h8v6H4z" fill="#f60" stroke="#c00"/><circle cx="8" cy="8" r="2" fill="#ff0"/></svg></button>
                            </div>
                            <div class="kit-row">
                                <button aria-label="Eigenschaften"><svg viewBox="0 0 16 16"><path d="M1.5 4.5h10v11h-10z" fill="#fff" stroke="#000"/><path d="M3 8.5h6M3 10.5h6M3 12.5h6" stroke="#000"/><path d="M7 3l8-2v6h-4z" fill="#cc9" stroke="#000"/></svg></button>
                                <button class="navy on" aria-label="Lineare Bemaßung"><svg><use href="#k-dim"/></svg></button>
                                <button aria-label="Freie Bemaßung"><svg viewBox="0 0 16 16"><path d="M1.5 3v11M14.5 3v11M1 5.5h14" stroke="#008"/><path d="M5.5 14V7.5h5M5.5 10.5h4M11.5 14V9.5h3" fill="none" stroke="#e00"/></svg></button>
                                <button aria-label="Kettenmaß"><svg><use href="#k-comb"/></svg></button>
                                <button aria-label="Bezugsmaß"><svg viewBox="0 0 16 16"><path d="M1.5 2v12M14.5 2v12M9.5 6v8M1 4.5h14M1 9.5h8" stroke="#008" fill="none"/></svg></button>
                                <button aria-label="Koordinatenmaß"><svg><use href="#k-comb"/></svg></button>
                                <button aria-label="Winkelmaß"><svg viewBox="0 0 16 16"><path d="M2.5 1v13.5H15M2 4l11 10M6 3c5 1 8 5 8 9" fill="none" stroke="#008"/></svg></button>
                                <button aria-label="Radius"><svg viewBox="0 0 16 16"><circle cx="8" cy="8" r="7" fill="none" stroke="#008"/><path d="M8 8V3M6 5l2-3 2 3" fill="none" stroke="#008"/></svg></button>
                                <button aria-label="Durchmesser"><svg viewBox="0 0 16 16"><circle cx="8" cy="8" r="7" fill="none" stroke="#008"/><path d="M8 1v14M6 5l2-3 2 3M6 11l2 3 2-3" fill="none" stroke="#008"/></svg></button>
                                <button aria-label="Bogenmaß"><svg viewBox="0 0 16 16"><path d="M1 6v8h3c1-4 7-4 8 0h3V6M1 9c4-4 10-4 14 0M6 1l4 3M10 1L6 4" fill="none" stroke="#008"/></svg></button>
                                <button aria-label="Hinweis"><svg viewBox="0 0 16 16"><path d="M1 10l3 4 7-7h4M10 1l4 4M14 1l-4 4" fill="none" stroke="#008"/></svg></button>
                                <button aria-label="Mittellinien"><svg viewBox="0 0 16 16"><path d="M8 0v16M0 8h16" stroke="#e00" stroke-width="1.5" stroke-dasharray="3 1"/></svg></button>
                                <button aria-label="Explodieren"><svg viewBox="0 0 16 16"><path d="M1 1l14 14M15 1L1 15M8 0v16M0 8h16" stroke="#c00" stroke-dasharray="4 1"/><path d="M4.5 6.5h5v5h-5zM7.5 4.5h5v5h-5z" fill="#fff" stroke="#000"/></svg></button>
                            </div>
                            <footer><span>Lineare Bemaßung</span><span>M10</span><span></span></footer>
                        </div>
                        <button class="kit-save" aria-label="Speichern"><svg viewBox="0 0 24 26"><path d="M3 1h15l5 5v17l-2 2H3l-2-2V3z" fill="#3bb0f0"/><path d="M6 1h11v7H6z" fill="#eee"/><path d="M13 2h3v5h-3z" fill="#0a6cc0"/><path d="M4 13h16v12H4z" fill="#f4f4f4"/><path d="M6 17h12M6 20h12" stroke="#aaa"/></svg></button>
                    </div>
                </section>

                <!-- Bemaßung -->
                <section class="palette dimension">
                    <header><h2>Bemaßung</h2><button aria-label="Schließen">x</button></header>
                    <div class="dimension-body">
                        <div class="dimension-left">
                            <fieldset class="type">
                                <legend>Type</legend>
                                <fieldset class="align">
                                    <legend>Ausrichtung</legend>
                                    <label><input type="radio" name="align" checked>Ortho</label>
                                    <label><input type="radio" name="align">Frei</label>
                                    <label><input type="radio" name="align">X-Achse</label>
                                    <label><input type="radio" name="align">Y-Achse</label>
                                    <label class="off"><input type="radio" name="align" disabled>Z-Achse</label>
                                </fieldset>
                                <label class="linked"><input type="checkbox">Verknüpft</label>
                                <div class="scope">
                                    <label class="off"><input type="radio" name="scope" disabled>Segment</label>
                                    <label class="off"><input type="radio" name="scope" disabled>Element</label>
                                </div>
                            </fieldset>
                            <label class="dynam"><input type="checkbox">Dynam. aus</label>
                            <button class="push analog">Analog zu</button>
                        </div>
                        <fieldset class="options">
                            <legend>Optionen</legend>
                            <button class="push">Text</button>
                            <button class="push">Präfix/Suffix</button>
                            <button class="push">Pfeilkopfart</button>
                            <button class="push">Hilfslinien</button>
                            <button class="push">Abweichung</button>
                        </fieldset>
                    </div>
                </section>
            </div>

            <div class="vscroll">
                <div class="vtrack"><span class="thumb"></span></div>
                <button aria-label="Schließen"><svg viewBox="0 0 14 14"><path d="M1.5 2.5h11v10h-11z" fill="#fff" stroke="#000"/><path d="M3 4l8 7M11 4l-8 7" stroke="#e00"/></svg></button>
                <button aria-label="Raster"><svg viewBox="0 0 14 14"><path d="M3.5 1v12M7.5 1v12M11.5 1v12M1 3.5h13M1 7.5h13M1 11.5h13" stroke="#000"/></svg></button>
                <button aria-label="Fang"><svg viewBox="0 0 14 14"><path d="M5 1v4H1v4h4v4h4V9h4V5H9V1z" fill="#ff0"/><path d="M5 1v4H1M1 9h4v4M9 13V9h4M13 5H9V1" fill="none" stroke="#000"/></svg></button>
                <button aria-label="Zoom Seite"><svg viewBox="0 0 14 14"><use href="#m-mag"/><path d="M4 3h4l2 2v5H4z" fill="none" stroke="#000"/></svg></button>
                <button aria-label="Zoom Fenster"><svg viewBox="0 0 14 14"><use href="#m-mag"/><path d="M5 4h4v5H5z" fill="none" stroke="#000"/></svg></button>
                <button aria-label="Vergrößern"><svg viewBox="0 0 14 14"><use href="#m-mag"/><path d="M4 6.5h5M6.5 4v5" stroke="#000"/></svg></button>
                <button aria-label="Verkleinern"><svg viewBox="0 0 14 14"><use href="#m-mag"/><path d="M4 6.5h5" stroke="#000"/></svg></button>
                <button aria-label="Zoom zurück"><svg viewBox="0 0 14 14"><use href="#m-mag"/><path d="M4 4v3h3M4 7c1-3 5-3 5 1" fill="none" stroke="#00a"/></svg></button>
                <button class="off" aria-label="Zoom vor"><svg viewBox="0 0 14 14"><use href="#m-mag"/><path d="M9 4v3H6M9 7c-1-3-5-3-5 1" fill="none" stroke="#999"/></svg></button>
            </div>

            <div class="hscroll">
                <svg class="nav-arrows" viewBox="0 0 156 16">
                    <defs><g id="na"><path d="M0 5V-3" stroke="#999"/><path d="M0-5l2 4h-4z" fill="#999"/></g></defs>
                    <use href="#na" x="11" y="8"/>
                    <use href="#na" transform="translate(31 8) rotate(90)"/>
                    <use href="#na" transform="translate(52 8) rotate(60)"/>
                    <use href="#na" transform="translate(71 8) rotate(45)"/>
                    <use href="#na" transform="translate(89 8) rotate(20)"/>
                    <use href="#na" transform="translate(110 8) rotate(-25)"/>
                    <use href="#na" transform="translate(132 8) rotate(-45)"/>
                    <use href="#na" transform="translate(151 8) rotate(-60)"/>
                </svg>
                <div class="htrack"><span class="thumb"></span></div>
                <svg class="resize" viewBox="0 0 9 9"><path d="M6 0h2v2H6zM3 3h2v2H3zM6 3h2v2H6zM0 6h2v2H0zM3 6h2v2H3zM6 6h2v2H6z" fill="#bbb"/></svg>
            </div>
        </section>

        <div class="tabs">
            <a href="#">Themes</a>
            <a href="#">Strukturinfo</a>
        </div>

        <aside class="colors">
            <span class="grip flat"></span>
            <button class="swatch black on" aria-label="Schwarz"></button>
            <button class="swatch red" aria-label="Rot"></button>
            <button class="swatch orange" aria-label="Orange"></button>
            <button class="swatch yellow" aria-label="Gelb"></button>
            <button class="swatch green" aria-label="Grün"></button>
            <button class="swatch cyan" aria-label="Cyan"></button>
            <button class="swatch blue" aria-label="Blau"></button>
            <button class="swatch magenta" aria-label="Magenta"></button>
            <span class="rule"></span>
            <button aria-label="Textfarbe"><svg><use href="#i-a"/></svg></button>
            <span class="rule"></span>
            <button class="pressed" aria-label="Farbe übernehmen"><svg><use href="#i-hand"/></svg></button>
            <span class="rule"></span>
            <button aria-label="Palette"><svg><use href="#i-palette"/></svg></button>
            <span class="rule"></span>
            <button aria-label="Layerfarbe"><svg><use href="#i-colstack"/></svg></button>
        </aside>
    </main>

    <div class="toolbar viewbar">
        <span class="grip"></span>
        <select class="combo projection" aria-label="Projektion" disabled><option>Perspektive</option></select>
        <span class="sep"></span>
        <input type="text" value="-0.00" aria-label="Winkel">
        <span class="sep"></span>
        <button aria-label="Kamera links"><svg><use href="#i-cam-l"/></svg></button>
        <button aria-label="Kamera rechts"><svg><use href="#i-cam-r"/></svg></button>
        <input type="text" value="0.00" aria-label="Seitlich">
        <span class="sep"></span>
        <button aria-label="Kamera hoch"><svg><use href="#i-cam-u"/></svg></button>
        <button aria-label="Kamera runter"><svg><use href="#i-cam-d"/></svg></button>
        <input type="text" value="0.00" aria-label="Höhe">
        <span class="sep"></span>
        <button aria-label="Rechts drehen"><svg><use href="#i-cam-cw"/></svg></button>
        <button aria-label="Links drehen"><svg><use href="#i-cam-ccw"/></svg></button>
        <span class="sep"></span>
        <input class="distance" type="text" value="1000.00" aria-label="Abstand">
        <span class="sep"></span>
        <button aria-label="Weiter weg"><svg><use href="#i-down"/></svg></button>
        <button aria-label="Näher"><svg><use href="#i-up"/></svg></button>
        <button aria-label="Kamera zu Punkt"><svg><use href="#i-cam-x"/></svg></button>
        <button aria-label="Kamera bewegen"><svg><use href="#i-cam-cross"/></svg></button>
        <button aria-label="Kamera aktiv"><svg><use href="#i-cam-on"/></svg></button>
        <span class="grip fourth"></span>
        <div class="line-box">
            <select class="combo linestyle" aria-label="Linienart"><option>Voll</option></select>
            <span class="line-sample"></span>
        </div>
        <span class="sep"></span>
        <button aria-label="Linienstil neu"><svg><use href="#i-aplus"/></svg></button>
        <button aria-label="Linienstil"><svg><use href="#i-a"/></svg></button>
        <span class="sep"></span>
        <button class="on" aria-label="Fest"><svg><use href="#i-f"/></svg></button>
        <button aria-label="Linie"><svg><use href="#i-minus"/></svg></button>
        <select class="combo linetype" aria-label="Linientyp"><option>LTyp:0&nbsp; Breite:0</option></select>
        <span class="sep"></span>
        <button aria-label="Linie übernehmen"><svg><use href="#i-hand"/></svg></button>
        <button aria-label="Stil"><svg><use href="#i-s"/></svg></button>
        <span class="sep"></span>
        <button aria-label="Linienlayer"><svg><use href="#i-stack"/></svg></button>
    </div>

    <footer class="statusbar">
        <span class="hint">Setze Punkte: 1,2-Punkte für die Distanz, (3-Textposition)</span>
        <span class="s-unit">mm</span>
        <span class="s-snap">AUS</span>
        <span class="s-num">0</span>
        <span class="s-zoom">11%</span>
        <span class="s-mode">2D MODUS</span>
        <span class="s-set dim-text">PKT SETZ</span>
        <span class="s-pre">VOREINST XY KE</span>
    </footer>

    <script src="script.js"></script>
</body>
</html>
```

FILE: styles.css
```css
* {
    box-sizing: border-box;
}
body {
    margin: 0;
    height: 100vh;
    display: flex;
    flex-direction: column;
    background: #eeeef2;
    color: #1e1e1e;
    font-family: 'Open Sans', 'Noto Sans', sans-serif;
    font-size: 11px;
    overflow: hidden;
}
button {
    padding: 0;
    border: 1px solid transparent;
    background: none;
    font: inherit;
    color: inherit;
}
a {
    color: inherit;
    text-decoration: none;
}
input, select {
    font: inherit;
    color: #000;
}
svg {
    display: block;
}
.sprite {
    display: none;
}
.serif {
    font-family: 'Liberation Serif', serif;
}
.serif-b {
    font-family: 'Liberation Serif', serif;
    font-weight: bold;
}
.ui-b {
    font-family: 'Open Sans', sans-serif;
    font-weight: bold;
}

/* title + menu */
.titlebar {
    height: 25px;
    flex: none;
    display: flex;
    align-items: center;
    padding: 0 6px 0 12px;
    background: #eeeef0;
}
.app-logo {
    width: 16px;
    height: 16px;
    margin-right: 20px;
}
h1 {
    margin: 0;
    font-family: Roboto, sans-serif;
    font-size: 12px;
    font-weight: normal;
    color: #555;
}
.win-buttons {
    margin-left: auto;
    display: flex;
    gap: 10px;
}
.win-buttons button {
    width: 24px;
    height: 20px;
    display: grid;
    place-items: center;
}
.win-buttons svg {
    width: 11px;
    height: 11px;
}
.win-buttons.small {
    gap: 0;
}
.win-buttons.small button {
    width: 17px;
}
.win-buttons.small svg {
    width: 10px;
    height: 10px;
}
.menubar {
    height: 26px;
    flex: none;
    display: flex;
    align-items: center;
    gap: 20px;
    padding: 0 2px 0 10px;
    background: #eeeef0;
}
.menubar .grip {
    height: 17px;
    margin-right: -14px;
}
.doc-logo {
    width: 16px;
    height: 16px;
    margin-right: -11px;
}

/* toolbars */
.grip {
    flex: none;
    width: 6px;
    height: 25px;
    background-image: linear-gradient(90deg, #eeeef2 1px, transparent 1px), linear-gradient(#999 1px, #eeeef2 1px);
    background-size: 2px 3px;
}
.grip.flat {
    width: 25px;
    height: 3px;
    background: repeating-linear-gradient(90deg, #aaa 0 1px, transparent 1px 2px);
}
.toolbar {
    height: 32px;
    flex: none;
    display: flex;
    align-items: center;
    padding-left: 10px;
}
.toolbar .grip {
    margin-right: 6px;
}
.toolbar button {
    flex: none;
    width: 30px;
    height: 29px;
    display: grid;
    place-items: center;
}
.toolbar button svg {
    width: 24px;
    height: 24px;
}
.toolbar button.on {
    border-color: #3399ff;
}
.toolbar .mode {
    font: italic 19px 'Liberation Sans', sans-serif;
    color: #999;
}
.sep {
    flex: none;
    width: 6px;
    height: 27px;
    background: linear-gradient(#c8c8d8, #c8c8d8) 3px 0 / 1px 100% no-repeat;
}
.toolbar .second {
    margin: 0 10px 0 12px;
}
.dct {
    font-size: 12px;
    color: #000;
}
.toolbar input {
    height: 23px;
    border: 1px solid #ccccdc;
    background: #fff;
    padding: 0 3px;
}
.combo {
    height: 23px;
    border: 1px solid #ccccdc;
    background: #fff conic-gradient(from 315deg at 50% 100%, #666 90deg, transparent 0) right 4px center / 8px 4px no-repeat;
    appearance: none;
    padding: 0 20px 0 4px;
}
.coords {
    height: 34px;
    margin-bottom: 1px;
}
.coords label {
    display: flex;
    align-items: center;
    justify-content: flex-end;
    gap: 4px;
    width: 96px;
}
.coords label input {
    width: 73px;
}
.coords label.wide {
    width: 97px;
}
.coords label.wide input {
    width: 84px;
}
.coords label.angle input {
    width: 80px;
}
.toolbar .third {
    margin: 0 6px 0 12px;
}
.layer-box, .line-box {
    position: relative;
    width: 310px;
}
.layer, .linestyle, .linetype {
    width: 310px;
}
.layer {
    padding-left: 123px;
    font-size: 12px;
}
.layer-flags {
    position: absolute;
    left: 26px;
    top: 2px;
    width: 90px;
    height: 20px;
}

/* workspace */
.workspace {
    flex: 1;
    min-height: 0;
    display: flex;
}
.tools {
    flex: none;
    width: 42px;
    padding: 2px 0 0 1px;
}
.tools .grip {
    display: block;
    margin: 0 0 4px 3px;
}
.tools button + .grip {
    margin: 5px 0 4px 3px;
}
.tools button {
    position: relative;
    width: 31px;
    height: 29px;
    display: grid;
    place-items: center;
    font: bold 13px 'Liberation Sans', sans-serif;
    color: #00a8e8;
}
.tools svg {
    width: 24px;
    height: 24px;
}
.tools .on {
    background: #c9def5;
}
.tools .more::after {
    content: "";
    position: absolute;
    right: -1px;
    bottom: -1px;
    width: 6px;
    height: 6px;
    border-right: 1px solid #000;
    border-bottom: 1px solid #000;
    background: linear-gradient(135deg, transparent 50%, #ff0 50%);
}
.tools .more.dark::after {
    background: linear-gradient(135deg, transparent 50%, #000 50%);
}
.view {
    flex: 1;
    min-width: 0;
    padding-top: 5px;
    display: grid;
    grid-template-columns: 28px 1fr 18px;
    grid-template-rows: 30px 1fr 19px;
    background: #f0f0f0;
}
.corner {
    width: 25px;
    height: 26px;
    margin-top: 1px;
    display: grid;
    place-items: center;
    border: 2px solid;
    border-color: #fff #888 #888 #fff;
    background: #f0f0f0;
}
.corner svg {
    width: 8px;
    height: 8px;
}
.ruler {
    background: #fff;
    shape-rendering: crispEdges;
    font: 11px 'Liberation Sans', sans-serif;
    overflow: hidden;
}
.ruler line {
    stroke: #000;
}
.ruler line.mark {
    stroke: #f0f;
}
.ruler text {
    text-anchor: middle;
}
.ruler-x {
    grid-column: 2 / 4;
    width: 100%;
    height: 26px;
    border-top: 2px solid #696969;
    border-left: 2px solid #696969;
}
.ruler-y {
    grid-row: 2 / 4;
    width: 25px;
    height: 100%;
    border-top: 1px solid #696969;
    border-left: 2px solid #808080;
}
.canvas {
    grid-column: 2;
    position: relative;
    min-width: 0;
    overflow: hidden;
    background: #fff;
    border-top: 1px solid #696969;
    border-left: 2px solid #696969;
}
.drawing {
    width: 100%;
    height: 100%;
    font-family: 'Liberation Sans', sans-serif;
    shape-rendering: crispEdges;
}
.thick {
    fill: none;
    stroke: #000;
    stroke-width: 3px;
}
.thin, .dim path, .leader path {
    fill: none;
    stroke: #000;
    stroke-width: 1px;
}
.smooth {
    shape-rendering: auto;
}
.dim path {
    marker-start: url(#tip);
    marker-end: url(#tip);
}
.leader path {
    marker-end: url(#tip);
    shape-rendering: auto;
}
.t-note {
    font-size: 22px;
}
.t-dim {
    font-size: 21px;
}
.t-cell {
    font-size: 15px;
}
.t-small {
    font-size: 12px;
}
.mid {
    text-anchor: middle;
}

/* scroll areas */
.vscroll {
    grid-column: 3;
    display: flex;
    flex-direction: column;
    align-items: center;
    padding: 0 2px 3px 0;
}
.vtrack {
    flex: 1;
    display: grid;
    grid-template-rows: 231fr 233fr 216fr;
}
.vtrack .thumb {
    grid-row: 2;
    width: 2px;
    background: #868686;
}
.vscroll button {
    height: 19px;
    width: 16px;
    display: grid;
    place-items: center;
    color: #000;
}
.vscroll button.off {
    color: #999;
}
.vscroll button svg {
    width: 14px;
    height: 14px;
}
.hscroll {
    grid-column: 2 / 4;
    display: flex;
    align-items: center;
    border-bottom: 1px solid #fff;
}
.nav-arrows {
    width: 156px;
    height: 18px;
    border-top: 1px solid #aaa;
}
.htrack {
    flex: 1;
    display: grid;
    grid-template-columns: 573fr 597fr 451fr;
}
.htrack .thumb {
    grid-column: 2;
    height: 2px;
    background: #868686;
}
.resize {
    width: 9px;
    height: 9px;
    margin: 4px 5px 0 4px;
}

/* right side */
.tabs {
    flex: none;
    width: 22px;
    padding: 1px 0 0 2px;
    display: flex;
    flex-direction: column;
    gap: 13px;
    background: #fafafa;
}
.tabs a {
    writing-mode: vertical-rl;
    padding: 5px 2px 5px 0;
    height: 57px;
    width: 20px;
    line-height: 17px;
    border: 1px solid #999;
    border-right: 0;
    border-radius: 4px 0 0 4px;
    font-family: 'Liberation Sans', sans-serif;
    font-size: 12px;
    color: #666;
}
.tabs a + a {
    height: 75px;
}
.colors {
    flex: none;
    width: 34px;
    padding: 6px 0 0 2px;
}
.colors .grip {
    display: block;
    margin: 0 0 4px 3px;
}
.colors button {
    width: 30px;
    height: 29px;
    display: grid;
    place-items: center;
}
.colors svg {
    width: 24px;
    height: 24px;
}
.rule {
    display: block;
    height: 6px;
    width: 30px;
    background: linear-gradient(#c8c8d8, #c8c8d8) 0 2px / 100% 1px no-repeat;
}
.colors .pressed svg {
    background: #bbb;
}
.swatch::before {
    content: "";
    width: 22px;
    height: 21px;
    background: currentColor;
}
.colors .swatch.on {
    background: #c9def5;
}
.colors .black { color: #000; }
.colors .red { color: #d80000; }
.colors .orange { color: #e87400; }
.colors .yellow { color: #f0d800; }
.colors .green { color: #30b800; }
.colors .cyan { color: #00d8d8; }
.colors .blue { color: #0000d8; }
.colors .magenta { color: #d800d8; }

/* floating palettes */
.palette {
    position: absolute;
    border: 1px solid #bbb;
    background: #f0f0f0;
    overflow: hidden;
    color: #000;
}
.palette header {
    display: flex;
    align-items: center;
    background: #f3f3f3;
}
.palette h2 {
    margin: 0;
    flex: 1;
    font-size: 11px;
    font-weight: normal;
    color: #888;
}
.toolkit {
    right: 44px;
    top: 17px;
    width: 406px;
    border-radius: 7px;
}
.toolkit header {
    height: 30px;
    padding: 0 9px 2px 7px;
    gap: 6px;
}
.toolkit header > svg {
    width: 16px;
    height: 16px;
}
.toolkit header button svg {
    width: 12px;
    height: 12px;
}
.toolkit nav {
    height: 19px;
    display: flex;
    align-items: center;
    gap: 14px;
    padding-left: 7px;
    background: #fff;
    color: #666;
}
.toolkit-body {
    display: flex;
}
.toolkit-left {
    flex: 1;
    padding-top: 1px;
}
.kit-row {
    display: flex;
    height: 22px;
}
.kit-row button {
    width: 23px;
    height: 21px;
    display: grid;
    place-items: center;
    border-radius: 2px;
}
.kit-row svg {
    width: 16px;
    height: 16px;
}
.navy {
    color: #000080;
}
.kit-row .on {
    background: #e5f3ff;
    border-color: #cce8ff;
}
.toolkit footer {
    height: 22px;
    display: flex;
    align-items: center;
    border-top: 1px solid #ccc;
}
.toolkit footer span {
    width: 74px;
    height: 18px;
    padding-left: 4px;
    border-left: 1px solid #ccc;
    line-height: 18px;
}
.toolkit footer span:first-child {
    width: 179px;
    padding-left: 1px;
    border-left-color: transparent;
}
.kit-save {
    width: 50px;
    background: #2b579a;
    display: grid;
    place-items: center;
}
.kit-save svg {
    width: 24px;
    height: 26px;
}
.dimension {
    right: 150px;
    top: 492px;
    width: 239px;
    height: 237px;
    border-radius: 4px;
    font-family: 'Liberation Sans', sans-serif;
}
.dimension header {
    height: 31px;
    padding: 0 0 2px 8px;
    font-family: 'Open Sans', sans-serif;
}
.dimension header button {
    width: 19px;
    height: 19px;
    margin: 3px 1px 0 0;
    background: #dcdcdc;
    color: #fff;
    line-height: 16px;
}
.dimension-body {
    display: flex;
    gap: 3px;
    padding: 0 2px;
}
.dimension-left {
    width: 132px;
}
fieldset {
    margin: 0;
    padding: 0;
    border: 1px solid #dcdcdc;
    min-width: 0;
}
legend {
    padding: 0 2px;
    margin-left: 6px;
    line-height: 13px;
}
.type {
    height: 157px;
}
.align {
    display: flex;
    flex-direction: column;
    justify-content: space-between;
    width: 105px;
    margin: 1px 0 0 8px;
    padding-bottom: 4px;
    height: 105px;
}
.dimension label {
    display: flex;
    align-items: center;
    gap: 3px;
    height: 17px;
}
.align label {
    padding-left: 8px;
}
.dimension label.off {
    color: #888;
}
.dimension input {
    appearance: none;
    width: 13px;
    height: 13px;
    margin: 0;
    border: 1px solid #666;
    background: #f6f6f6;
}
.dimension input[type=radio] {
    border-radius: 50%;
}
.dimension input[type=checkbox] {
    border-radius: 3px;
}
.dimension input:checked {
    border: 4px solid #005fb8;
    background: #fff;
}
.dimension input:disabled {
    border-color: #c0c0c0;
}
.linked {
    margin: 1px 0 0 18px;
}
.scope {
    display: flex;
    gap: 6px;
    margin-left: 2px;
}
.dynam {
    margin: 3px 0 0 3px;
}
.push {
    height: 21px;
    border: 1px solid #d0d0d0;
    border-radius: 4px;
    background: #fdfdfd;
}
.analog {
    width: 69px;
    margin: 3px 0 0 5px;
}
.options {
    width: 98px;
    height: 190px;
    padding: 9px 8px 0 6px;
}
.options legend {
    margin-left: 0;
}
.options .push {
    display: block;
    width: 81px;
    margin-bottom: 14px;
}

/* bottom bars */
.viewbar {
    height: 33px;
}
.viewbar input {
    width: 61px;
}
.viewbar button + input {
    margin-left: 1px;
}
.viewbar input.distance {
    width: 124px;
}
.projection {
    width: 125px;
}
.projection:disabled {
    background-color: #eeeef2;
    background-image: conic-gradient(from 315deg at 50% 100%, #c4c4d4 90deg, transparent 0);
    color: #a0a0a0;
    opacity: 1;
}
.toolbar .fourth {
    margin: 0 6px 0 12px;
}
.linestyle {
    padding-left: 126px;
    font-size: 12px;
}
.line-sample {
    position: absolute;
    left: 4px;
    top: 11px;
    width: 113px;
    height: 1px;
    background: #000;
}
.statusbar {
    height: 21px;
    flex: none;
    display: flex;
    align-items: center;
    padding: 0 17px 0 3px;
    background: #68217a;
    border-bottom: 1px solid #eeeef2;
    color: #fff;
}
.hint {
    flex: 1;
}
.s-unit {
    width: 48px;
}
.s-snap {
    width: 41px;
}
.s-num {
    width: 57px;
}
.s-zoom {
    width: 89px;
}
.s-mode {
    width: 128px;
}
.s-set {
    width: 61px;
}
.dim-text {
    color: #b08cbc;
}
```

FILE: script.js
```js
// Rulers: 87.5 px per 100 mm, one tick every 20 mm
const NS = 'http://www.w3.org/2000/svg';
const STEP = 17.5;

function add(parent, name, attrs, text) {
    const el = document.createElementNS(NS, name);
    for (const key in attrs) el.setAttribute(key, attrs[key]);
    if (text) el.textContent = text;
    parent.appendChild(el);
}

function tick(ruler, vertical, pos, length, cls) {
    const p = Math.floor(pos) + 0.5;
    add(ruler, 'line', vertical
        ? { x1: 0, x2: length, y1: p, y2: p, class: cls }
        : { x1: p, x2: p, y1: 0, y2: length, class: cls });
}

function drawRuler(ruler, vertical, origin, first, last, cursor) {
    for (let i = first; i <= last; i++) {
        const pos = origin + i * STEP;
        tick(ruler, vertical, pos, vertical ? 13 : 11, '');
        if (i % 5 === 0) {
            const label = (vertical ? -i : i) * 20 + 'mm';
            add(ruler, 'text', vertical
                ? { transform: `translate(19 ${pos}) rotate(-90)` }
                : { x: pos, y: 20 }, label);
        }
    }
    tick(ruler, vertical, cursor, 24, 'mark');
}

drawRuler(document.getElementById('rulerX'), false, 785, -45, 57, 1765);
drawRuler(document.getElementById('rulerY'), true, 159, -9, 41, 515);
```
